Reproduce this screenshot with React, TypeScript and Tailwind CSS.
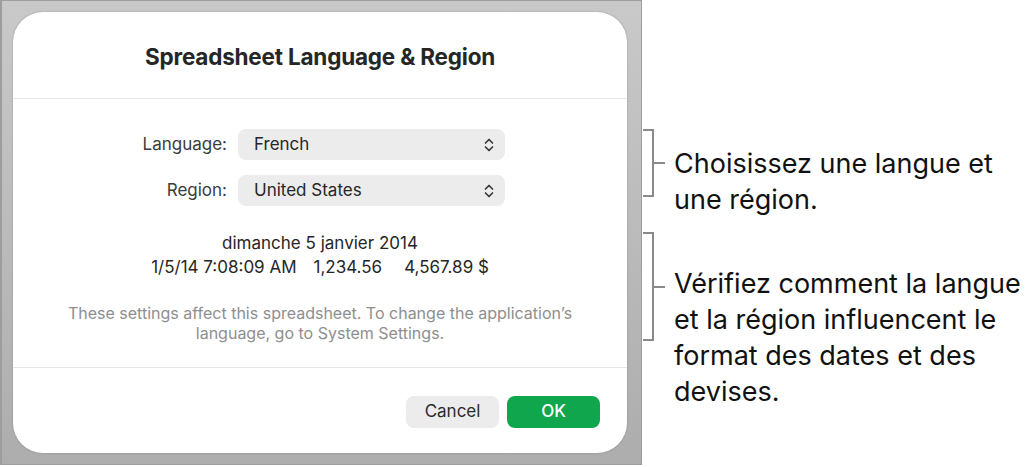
import React from 'react';

const font = { fontFamily: 'Inter, "Noto Sans", sans-serif' };

const Chevrons = () => (
  <svg width="10" height="14" viewBox="0 0 10 14" fill="none" stroke="#3a3a3a" strokeWidth="1.7" strokeLinecap="round" strokeLinejoin="round">
    <path d="M1.5 5 L5 1.5 L8.5 5" />
    <path d="M1.5 9 L5 12.5 L8.5 9" />
  </svg>
);

const SelectField = ({ label, value }: { label: string; value: string }) => (
  <div className="flex items-center">
    <span className="w-[100px] text-right text-[17px] text-[#3b3b3b]">{label}</span>
    <div className="ml-[11px] w-[267px] h-[31px] rounded-[8px] bg-[#ececec] flex items-center justify-between pl-[16px] pr-[11px]">
      <span className="text-[17px] text-[#262626]">{value}</span>
      <Chevrons />
    </div>
  </div>
);

const Callout = ({ height, textTop, lines }: { height: number; textTop: number; lines: string[] }) => (
  <div className="flex items-start" style={{ height }}>
    <div
      className="relative shrink-0 w-[11px] border-t-2 border-b-2 border-r-2 border-[#8a8a8a] flex items-center"
      style={{ height }}
    >
      <div className="absolute left-[10px] w-[12px] h-[2px] bg-[#8a8a8a]" />
    </div>
    <div
      className="ml-[20px] text-[27px] leading-[36px] text-[#111] whitespace-nowrap"
      style={{ marginTop: textTop }}
    >
      {lines.map((l) => (
        <div key={l}>{l}</div>
      ))}
    </div>
  </div>
);

export default function App() {
  return (
    <div className="w-[1036px] h-[467px] bg-white flex overflow-hidden" style={font}>
      {/* window backdrop */}
      <div className="shrink-0 w-[642px] h-[465px] border-l-2 border-t border-r border-b border-[#9d9d9d] bg-gradient-to-b from-[#c9c9c9] to-[#adadad] pl-[11px] pt-[11px]">
        <div className="w-[614px] h-[441px] bg-white rounded-[30px] shadow-[0_0_2px_rgba(0,0,0,0.25)] flex flex-col">
          <div className="h-[87px] pt-[3px] flex items-center justify-center border-b border-[#e6e6e6]">
            <h1 className="text-[22.5px] font-bold text-[#262626] tracking-[-0.2px]">Spreadsheet Language &amp; Region</h1>
          </div>

          <div className="flex-1 flex flex-col">
            <div className="pt-[30px] pl-[114px] flex flex-col gap-[15px]">
              <SelectField label="Language:" value="French" />
              <SelectField label="Region:" value="United States" />
            </div>

            <div className="mt-[25px] flex flex-col items-center text-[17px] leading-[24px] text-[#262626]">
              <div>dimanche 5 janvier 2014</div>
              <div className="flex">
                <span>1/5/14 7:08:09 AM</span>
                <span className="ml-[17px]">1,234.56</span>
                <span className="ml-[22px]">4,567.89 $</span>
              </div>
            </div>

            <p className="mt-[24px] text-center text-[16px] leading-[20px] text-[#8e8e8e]">
              These settings affect this spreadsheet. To change the application’s
              <br />
              language, go to System Settings.
            </p>
          </div>

          <div className="h-[86px] border-t border-[#e6e6e6] flex items-start justify-end gap-[8px] pt-[28px] pr-[27px]">
            <button className="w-[93px] h-[32px] rounded-[8px] bg-[#ececec] text-[17px] text-[#2a2a2a]">Cancel</button>
            <button className="w-[93px] h-[32px] rounded-[8px] bg-[#0fa64d] text-[17px] font-medium text-white">OK</button>
          </div>
        </div>
      </div>

      {/* annotations */}
      <div className="pl-[1px] pt-[129px] flex flex-col gap-[35px]">
        <Callout height={68} textTop={17} lines={['Choisissez une langue et', 'une région.']} />
        <Callout height={109} textTop={34} lines={['Vérifiez comment la langue', 'et la région influencent le', 'format des dates et des', 'devises.']} />
      </div>
    </div>
  );
}
